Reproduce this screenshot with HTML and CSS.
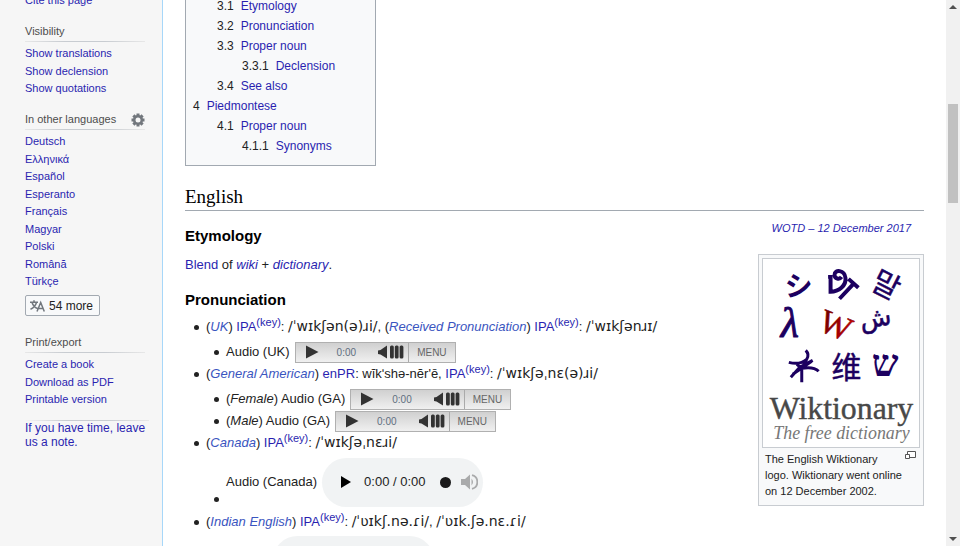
FILE: index.html
```html
<!DOCTYPE html>
<html lang="en">
<head>
<meta charset="utf-8">
<title>Wiktionary</title>
<link rel="stylesheet" href="styles.css">
</head>
<body>
<svg class="defs" width="0" height="0" aria-hidden="true">
  <symbol id="play" viewBox="0 0 14 14"><path d="M1 0.5 13.5 7 1 13.5Z"/></symbol>
  <symbol id="volume" viewBox="0 0 26 14"><path d="M0 5.5 2.5 5 9 0.500V13.500L2.500 9.500 0 9Z"/><rect x="12" y="0.500" width="3.800" height="13" rx="1.500"/><rect x="16.800" y="0.500" width="3.800" height="13" rx="1.500"/><rect x="21.600" y="0.500" width="3.800" height="13" rx="1.500"/></symbol>
</svg>
<div class="app">
  <nav class="sidebar">
    <section class="portal first">
      <ul><li><a href="#">Cite this page</a></li></ul>
    </section>
    <section class="portal">
      <h3>Visibility</h3>
      <ul>
        <li><a href="#">Show translations</a></li>
        <li><a href="#">Show declension</a></li>
        <li><a href="#">Show quotations</a></li>
      </ul>
    </section>
    <section class="portal">
      <h3>In other languages
        <button class="gear" aria-label="Language settings"><svg width="14" height="14" viewBox="0 0 14 14"><g fill="#72777d"><rect x="5.500" y="0.500" width="3" height="13"/><rect x="5.500" y="0.500" width="3" height="13" transform="rotate(45 7 7)"/><rect x="5.500" y="0.500" width="3" height="13" transform="rotate(90 7 7)"/><rect x="5.500" y="0.500" width="3" height="13" transform="rotate(135 7 7)"/><circle cx="7" cy="7" r="5"/></g><circle cx="7" cy="7" r="2.500" fill="#f6f6f6"/></svg></button>
      </h3>
      <ul>
        <li><a href="#">Deutsch</a></li>
        <li><a href="#">Ελληνικά</a></li>
        <li><a href="#">Español</a></li>
        <li><a href="#">Esperanto</a></li>
        <li><a href="#">Français</a></li>
        <li><a href="#">Magyar</a></li>
        <li><a href="#">Polski</a></li>
        <li><a href="#">Română</a></li>
        <li><a href="#">Türkçe</a></li>
      </ul>
      <button class="more"><svg width="15" height="12" viewBox="0 0 15 12" fill="none" stroke="#72777d" stroke-width="1.500"><path d="M0 2.200H8M4 0.300V2.200M2 2.500C3 5.500 5 7.500 7.500 8.500M6.500 2.500C5.500 5.800 3.500 8 0.500 9.200M7 11.500 10.700 2.500 14.300 11.500M8.300 8.500H13"/></svg>54 more</button>
    </section>
    <section class="portal">
      <h3>Print/export</h3>
      <ul>
        <li><a href="#">Create a book</a></li>
        <li><a href="#">Download as PDF</a></li>
        <li><a href="#">Printable version</a></li>
      </ul>
    </section>
    <p class="note"><a href="#">If you have time, leave us a note.</a></p>
  </nav>

  <main class="content">
    <div class="toc">
      <ul>
        <li class="l2"><span>3.1</span><a href="#">Etymology</a></li>
        <li class="l2"><span>3.2</span><a href="#">Pronunciation</a></li>
        <li class="l2"><span>3.3</span><a href="#">Proper noun</a></li>
        <li class="l3"><span>3.3.1</span><a href="#">Declension</a></li>
        <li class="l2"><span>3.4</span><a href="#">See also</a></li>
        <li><span>4</span><a href="#">Piedmontese</a></li>
        <li class="l2"><span>4.1</span><a href="#">Proper noun</a></li>
        <li class="l3"><span>4.1.1</span><a href="#">Synonyms</a></li>
      </ul>
    </div>
    <h2>English</h2>
    <div class="columns">
      <article>
        <h3>Etymology</h3>
        <p><a href="#">Blend</a> of <a href="#"><i>wiki</i></a> + <a href="#"><i>dictionary</i></a>.</p>
        <h3>Pronunciation</h3>
        <ul class="pron">
          <li>
            <div class="line">(<a class="ext" href="#">UK</a>) <a href="#">IPA</a><sup><a href="#">(key)</a></sup>: <span class="ipa">/ˈwɪkʃən(ə)ɹi/</span>, (<a class="ext" href="#">Received Pronunciation</a>) <a href="#">IPA</a><sup><a href="#">(key)</a></sup>: <span class="ipa">/ˈwɪkʃənɹɪ/</span></div>
            <ul>
              <li class="row"><span>Audio (UK)</span>
                <div class="player"><button aria-label="Play"><svg width="14" height="14"><use href="#play"/></svg></button><span class="time">0:00</span><button class="vol" aria-label="Volume"><svg width="26" height="14"><use href="#volume"/></svg></button><button class="menu">MENU</button></div></li>
            </ul>
          </li>
          <li>
            <div class="line">(<a class="ext" href="#">General American</a>) <a href="#">enPR</a>: wĭkʹshə-nĕr'ē, <a href="#">IPA</a><sup><a href="#">(key)</a></sup>: <span class="ipa">/ˈwɪkʃəˌnɛ(ə)ɹi/</span></div>
            <ul>
              <li class="row"><span>(<i>Female</i>) Audio (GA)</span>
                <div class="player"><button aria-label="Play"><svg width="14" height="14"><use href="#play"/></svg></button><span class="time">0:00</span><button class="vol" aria-label="Volume"><svg width="26" height="14"><use href="#volume"/></svg></button><button class="menu">MENU</button></div></li>
              <li class="row"><span>(<i>Male</i>) Audio (GA)</span>
                <div class="player"><button aria-label="Play"><svg width="14" height="14"><use href="#play"/></svg></button><span class="time">0:00</span><button class="vol" aria-label="Volume"><svg width="26" height="14"><use href="#volume"/></svg></button><button class="menu">MENU</button></div></li>
            </ul>
          </li>
          <li>
            <div class="line">(<a class="ext" href="#">Canada</a>) <a href="#">IPA</a><sup><a href="#">(key)</a></sup>: <span class="ipa">/ˈwɪkʃəˌnɛɹi/</span></div>
            <ul>
              <li class="row native"><span>Audio (Canada)</span>
                <div class="audio"><button aria-label="Play"><svg width="10" height="12" viewBox="0 0 10 12"><path d="M0 0 10 6 0 12Z"/></svg></button><span>0:00 / 0:00</span><i class="knob"></i><button aria-label="Mute"><svg width="17" height="16" viewBox="0 0 17 16"><path fill="#a9aaab" d="M0 5H4L9 0.500V15.500L4 11H0Z"/><path d="M10.500 4.500Q13.500 8 10.500 11.500" fill="#a9aaab"/><path d="M11 1.200A7 7 0 0 1 11 14.800" fill="none" stroke="#a9aaab" stroke-width="1.800"/></svg></button></div></li>
            </ul>
          </li>
          <li>
            <div class="line">(<a class="ext" href="#">Indian English</a>) <a href="#">IPA</a><sup><a href="#">(key)</a></sup>: <span class="ipa">/ˈʋɪkʃ.nə.ɾi/</span>, <span class="ipa">/ˈʋɪk.ʃə.nɛ.ɾi/</span></div>
            <ul class="partial"><li class="audio"></li></ul>
          </li>
        </ul>
      </article>
      <aside>
        <p class="wotd"><a href="#">WOTD – 12 December 2017</a></p>
        <figure>
          <svg class="logo" viewBox="0 0 157 189" role="img" aria-label="Wiktionary logo">
            <defs><linearGradient id="red" x1="0" y1="0" x2="1" y2="0"><stop offset="0" stop-color="#600"/><stop offset="1" stop-color="#c00"/></linearGradient></defs>
            <g fill="#1c0060" text-anchor="middle">
              <text class="cjk bold" x="36" y="37" font-size="28">シ</text>
              <g fill="none" stroke="#1c0060" stroke-width="4"><path d="M65.500 18H70M68 18V33C76 33 84 27 83 19C82 11 72 10 72 16C72 20 77 21 79 18M77 40 92 24M86 20 96 29"/></g>
              <text class="cjk" x="0" y="11" font-size="30" stroke="#1c0060" stroke-width="0.400" transform="translate(124 26) rotate(27)">말</text>
              <text class="serif" x="27" y="79" font-size="42" font-style="italic" stroke="#1c0060">λ</text>
              <text class="serif" x="0" y="11" font-size="34" fill="url(#red)" stroke="#8b0000" stroke-width="0.500" transform="translate(73 67) rotate(22)">W</text>
              <text class="arab" x="0" y="3" font-size="26" stroke="#1c0060" stroke-width="0.500" transform="translate(114 65) rotate(-8)">ش</text>
              <g fill="none" stroke="#1c0060" stroke-width="3"><path d="M43 92Q47 96 44 101L39 110L39 124M26 104Q37 107 44 101M34 106 39 110M28 119 37 109 50 102M39 110Q51 108 56 113M30 116 49 103"/></g>
              <text class="cjk" x="84" y="120" font-size="30" stroke="#1c0060" stroke-width="0.500">维</text>
              <text class="serif bold" x="123" y="118" font-size="38">ש</text>
            </g>
            <text class="serif" x="79" y="161" font-size="32" fill="#484848" stroke="#484848" stroke-width="0.400" text-anchor="middle">Wiktionary</text>
            <text class="serif" x="79" y="181" font-size="18" font-style="italic" fill="#777" text-anchor="middle">The free dictionary</text>
          </svg>
          <figcaption><a class="magnify" href="#" aria-label="Enlarge"><svg width="11" height="9" viewBox="0 0 11 9" fill="#fff" stroke="#555"><path d="M2.500 0.500H10.500V6.500H2.500Z"/><path d="M0.500 3.500H4.500V7.500H0.500Z"/></svg></a>The English Wiktionary logo. Wiktionary went online on 12 December 2002.</figcaption>
        </figure>
      </aside>
    </div>
  </main>

  <div class="scrollbar" aria-hidden="true">
    <svg width="8" height="4" viewBox="0 0 8 4"><path fill="#505050" d="M0 4 4 0 8 4Z"/></svg>
    <div class="track"><div class="thumb"></div></div>
    <svg width="8" height="4" viewBox="0 0 8 4"><path fill="#505050" d="M0 0H8L4 4Z"/></svg>
  </div>
</div>
</body>
</html>
```
FILE: styles.css
```css
* { box-sizing: border-box; }
body { margin: 0; background: #fff; color: #222; font-family: "Liberation Sans", Arial, sans-serif; font-size: 13px; }
a { color: #2a1fb0; text-decoration: none; }
ul { list-style: none; margin: 0; padding: 0; }
h2, h3, p, figure { margin: 0; }
button { font: inherit; color: inherit; background: none; border: 0; padding: 0; display: flex; align-items: center; }
svg { display: block; flex: none; }
.defs { position: absolute; }

.app { display: flex; height: 100vh; overflow: hidden; }

/* Sidebar */
.sidebar { flex: none; width: 163px; padding: 0 17px 0 25px; background: #f6f6f6; border-right: 1px solid #a7d7f9; font-size: 11px; }
.portal { margin-bottom: 14px; }
.portal.first { margin-top: -8px; }
.portal li { line-height: 17px; }
.portal li:nth-child(even) { line-height: 18px; }
.portal h3 { display: flex; justify-content: space-between; align-items: center; font-size: 11px; font-weight: normal; line-height: 17px; color: #4d4d4d; padding-bottom: 1px; margin-bottom: 3px; border-bottom: 1px solid; border-image: linear-gradient(to right, #e8e8e8, #c8ccd1 33%, #c8ccd1 66%, #e8e8e8) 1; }
.more { gap: 4px; margin: 5px 0 18px; padding: 0 6px 0 4px; height: 21px; border: 1px solid #a2a9b1; border-radius: 2px; background: #f8f9fa; font-size: 12px; }
.note { border-top: 1px solid; border-image: linear-gradient(to right, #f6f6f6, #c8ccd1 33%, #c8ccd1 66%, #e8e8e8) 1; line-height: 14px; font-size: 12px; margin: -2px -4px 0 0; }

/* Article */
.content { flex: 1; min-width: 0; padding: 0 22px; }
.toc { width: fit-content; margin-top: -4px; padding: 0 40px 9px 7px; background: #f8f9fa; border: 1px solid #a2a9b1; border-top: 0; font-size: 12px; line-height: 20px; }
.toc li { display: flex; gap: 7px; }
.toc .l2 { padding-left: 24px; }
.toc .l3 { padding-left: 49px; }
h2 { margin-top: 18px; font: 19px/26px "Liberation Serif", "Times New Roman", serif; color: #000; border-bottom: 1px solid #a2a9b1; }
.columns { display: flex; justify-content: space-between; align-items: flex-start; }
article { flex: 1; min-width: 0; }
article h3 { font-size: 15px; line-height: 20px; color: #000; margin-top: 15px; }
article p { line-height: 20px; margin-top: 9px; }
.pron { margin-top: 6px; padding-left: 9px; white-space: nowrap; }
.line, .row { display: block; height: 22px; line-height: 22px; }
.line::before, .row::before { content: ""; flex: none; display: inline-block; width: 5px; height: 5px; border-radius: 50%; background: #222; margin-right: 7px; vertical-align: 1px; }
.pron ul { padding: 3px 0 0 20px; }
.row { display: flex; align-items: center; }
.ext { color: #3a55c0; font-style: italic; }
.ipa { font-family: "DejaVu Sans", sans-serif; font-size: 14px; line-height: 1; }
sup { font-size: 11px; line-height: 1; vertical-align: 5px; }

.player { display: flex; align-items: center; width: 161px; height: 21px; margin-left: 5px; border: 1px solid #b0b0b0; background: linear-gradient(#d0d0d0, #f0f0f0); fill: #333; color: #666; font-size: 10px; line-height: 19px; padding-left: 9px; }
.player .time { margin-left: 18px; color: #5f6f80; }
.player .vol { margin-left: auto; }
.player .menu { margin-left: 4px; height: 19px; padding: 0 8px; border-left: 1px solid #aaa; }

.row.native { height: 50px; margin-bottom: 4px; }
.row.native::before { align-self: flex-end; margin-bottom: 5px; }
.audio { display: flex; align-items: center; width: 161px; height: 49px; margin-left: 5px; padding: 0 4px 0 19px; border-radius: 25px; background: #f1f3f4; color: #222; }
.audio span { margin-left: 13px; }
.knob { flex: none; width: 11px; height: 11px; margin: 0 10px 0 14px; border-radius: 50%; background: #1a1a1a; }
.pron .partial { padding-left: 74px; }

/* Right column */
aside { flex: none; width: 166px; }
.wotd { margin: 8px 13px 0 0; text-align: right; font-size: 11px; font-style: italic; line-height: 18px; white-space: nowrap; }
figure { margin-top: 17px; padding: 3px; border: 1px solid #c8ccd1; background: #f8f9fa; }
.logo { width: 100%; border: 1px solid #c8ccd1; background: #fff; }
figcaption { padding: 3px; font-size: 11px; line-height: 16px; }
.magnify { float: right; margin: 0 1px 0 8px; }
.cjk { font-family: "Noto Sans CJK JP", sans-serif; }
.arab { font-family: "DejaVu Sans", sans-serif; }
.serif { font-family: "Liberation Serif", serif; }
.bold { font-weight: bold; }

/* Scrollbar */
.scrollbar { flex: none; width: 14px; display: flex; flex-direction: column; align-items: center; padding: 5px 0; background: #f1f1f1; }
.track { flex: 1; width: 100%; padding: 95px 2px 0; }
.thumb { height: 99px; background: #c1c1c1; }
```
